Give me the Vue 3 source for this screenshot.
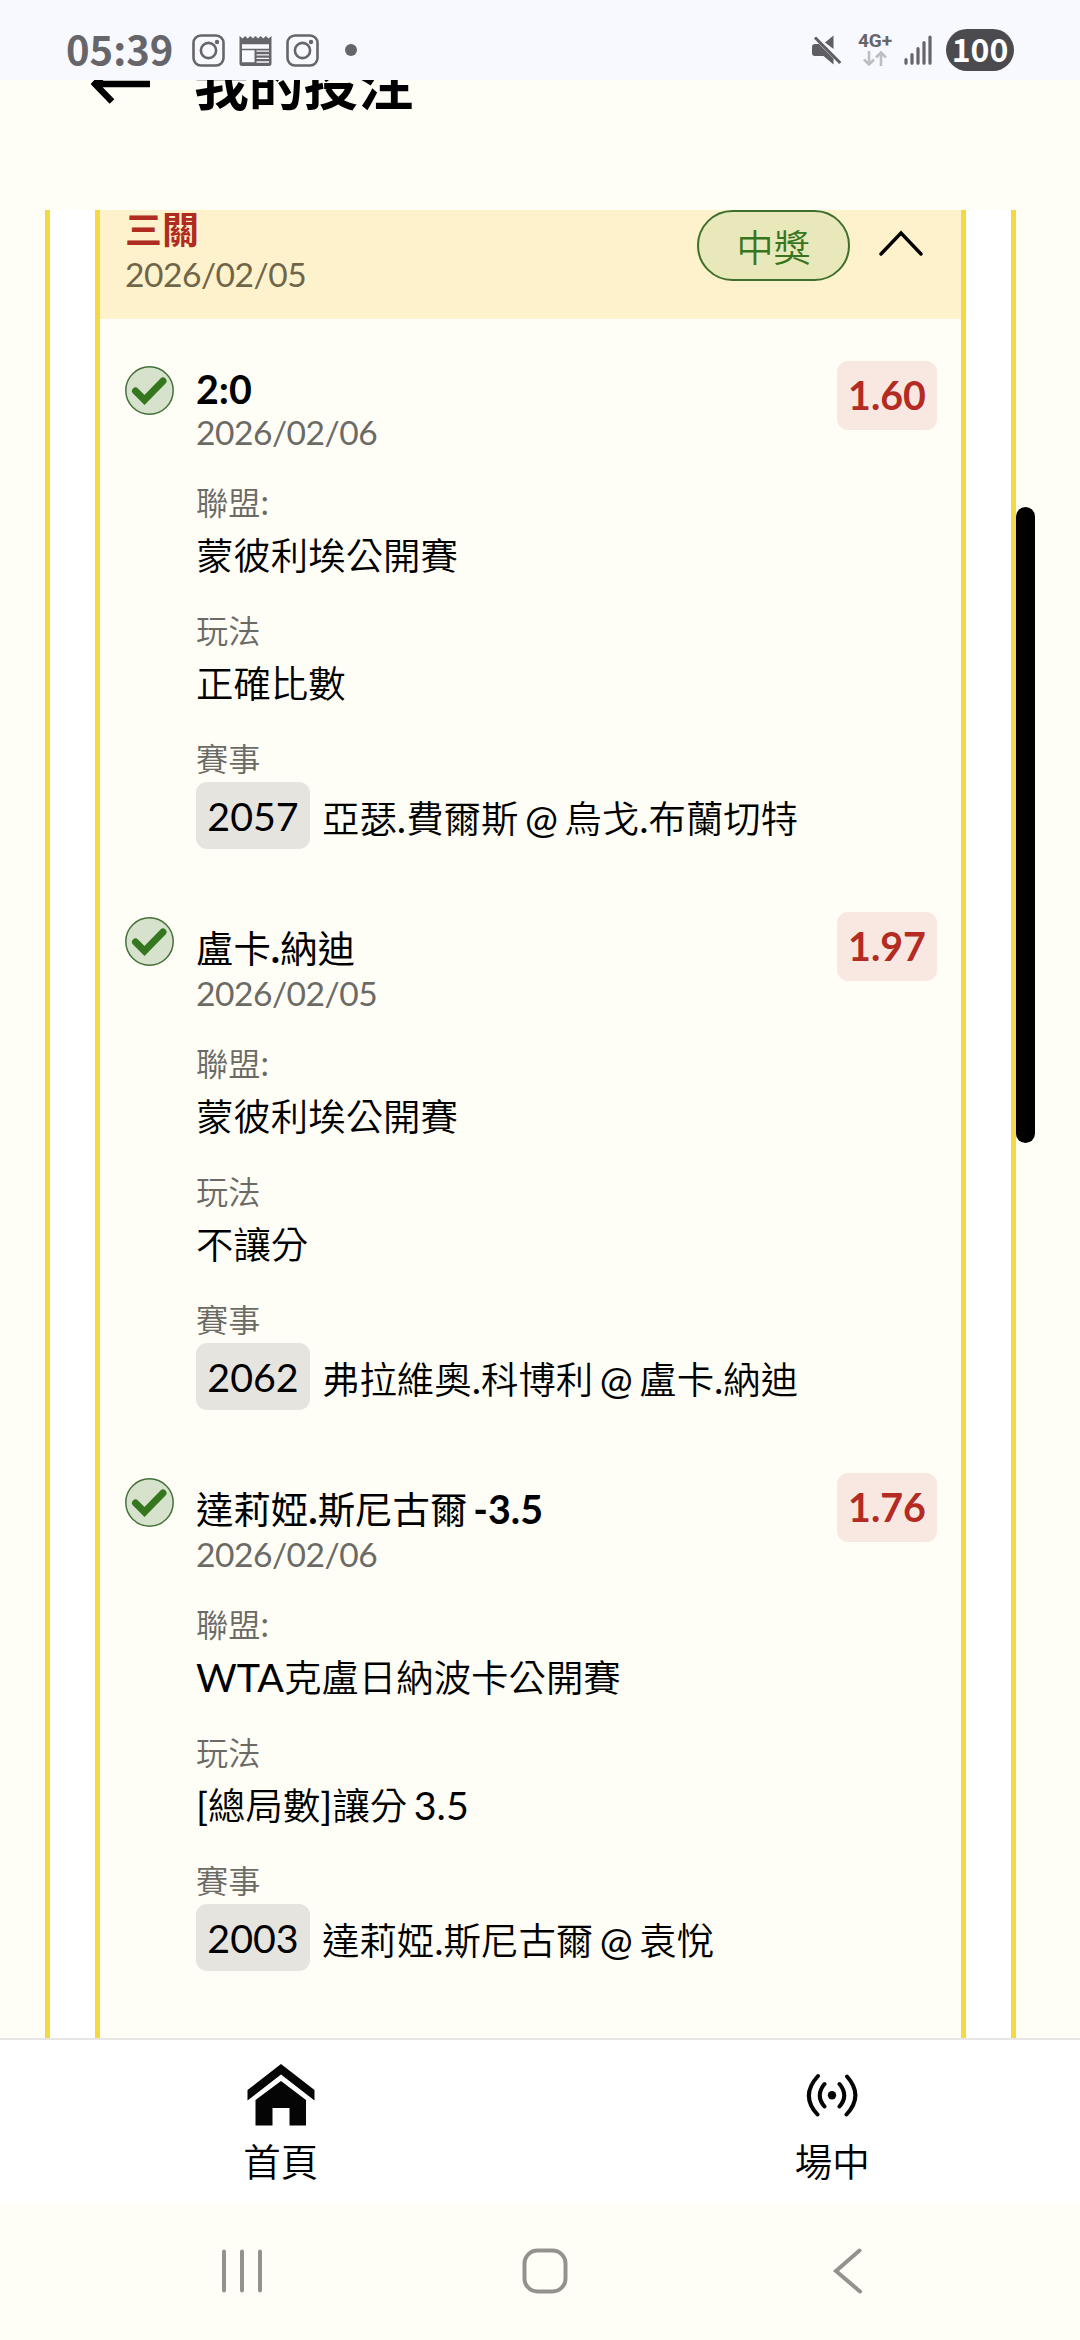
<template>
  <div class="screen">
    <div class="status-bar">
      <div class="status-left">
        <span class="clock">05:39</span>
        <svg class="notif" viewBox="0 0 33 33">
          <rect x="1.5" y="1.5" width="30" height="30" rx="7.5" />
          <circle cx="16.5" cy="16.5" r="7.6" />
          <circle class="solid" cx="25" cy="8" r="2.2" />
        </svg>
        <svg class="notif" viewBox="0 0 33 33">
          <path
            class="solid"
            d="M0.5 2l3 2.4 2.6-2.4 2.6 2.4 2.6-2.4 2.6 2.4 2.6-2.4 2.6 2.4 2.6-2.4 2.6 2.4 2.6-2.4 2.6 2.4 3-2.4V29.5a2.5 2.5 0 0 1-2.5 2.5H3a2.5 2.5 0 0 1-2.5-2.5z"
          />
          <path class="hole" d="M3 10.3h27v4.5H3zM3 16.3h12.5v12H3z" />
          <path class="gap" d="M17.5 17.2H30M17.5 20.8H30M17.5 24.4H30M17.5 28H30" />
        </svg>
        <svg class="notif" viewBox="0 0 33 33">
          <rect x="1.5" y="1.5" width="30" height="30" rx="7.5" />
          <circle cx="16.5" cy="16.5" r="7.6" />
          <circle class="solid" cx="25" cy="8" r="2.2" />
        </svg>
        <span class="more-dot"></span>
      </div>
      <div class="status-right">
        <svg class="mute" viewBox="0 0 30 30">
          <path d="M21.5 0.5V14L13 7.5zM0 12q0-3 3-3H7L21.5 23.500V29.500L11.500 21H3Q0 21 0 18z" />
          <path class="slash" d="M3 2.500L28.300 28" />
        </svg>
        <div class="network">
          <span class="network-type">4G+</span>
          <svg class="network-arrows" viewBox="0 0 24 15">
            <path d="M6 0V13M1 8.500L6 13.500L11 8.500M18 15V2M13 6.500L18 1.500L23 6.500" />
          </svg>
        </div>
        <svg class="signal" viewBox="0 0 28 30">
          <path d="M2 24.500V28.200M8 19.500V28.200M14 13.500V28.200M20 7.500V28.200M26 2V28.200" />
        </svg>
        <span class="battery">100</span>
      </div>
    </div>

    <header class="page-header">
      <div class="page-header-row">
        <svg class="back" viewBox="0 0 60 44">
          <path d="M59 22H4M23 2.500L4 22L21 39.500" />
        </svg>
        <h1>我的投注</h1>
      </div>
    </header>

    <main class="content">
      <div class="outer-card">
        <section class="slip">
          <div class="slip-header">
            <div class="slip-info">
              <div class="slip-type">三關</div>
              <div class="slip-date">2026/02/05</div>
            </div>
            <span class="result">中獎</span>
            <svg class="chevron" viewBox="0 0 44 26">
              <path d="M2 24L22 3L42 24" />
            </svg>
          </div>
          <div class="legs">
            <article v-for="leg in legs" :key="leg.id" class="leg">
              <svg class="won" viewBox="0 0 49 49">
                <circle cx="24.5" cy="24.5" r="23.7" />
                <path d="M10.500 25L19.500 34L38 15" />
              </svg>
              <div class="leg-body">
                <div class="pick" :class="{ tall: hasCjk(leg.pick) }">
                  <span v-for="(part, i) in split(leg.pick)" :key="i" :class="{ cjk: hasCjk(part) }">{{ part }}</span>
                </div>
                <div class="leg-date">{{ leg.date }}</div>
                <div class="label"><span class="cjk">聯盟</span>:</div>
                <div class="value">
                  <span v-for="(part, i) in split(leg.league)" :key="i" :class="{ cjk: hasCjk(part) }">{{ part }}</span>
                </div>
                <div class="label"><span class="cjk">玩法</span></div>
                <div class="value">
                  <span v-for="(part, i) in split(leg.market)" :key="i" :class="{ cjk: hasCjk(part) }">{{ part }}</span>
                </div>
                <div class="label"><span class="cjk">賽事</span></div>
                <div class="match">
                  <span class="match-id">{{ leg.id }}</span>
                  <span class="match-name">
                    <span v-for="(part, i) in split(leg.match)" :key="i" :class="{ cjk: hasCjk(part) }">{{ part }}</span>
                  </span>
                </div>
              </div>
              <span class="odds">{{ leg.odds }}</span>
            </article>
          </div>
        </section>
      </div>
      <div class="scroll-thumb"></div>
    </main>

    <nav class="tab-bar">
      <a class="tab">
        <svg class="tab-icon" viewBox="0 0 68 62">
          <path d="M34 0L67.500 26V36.500L34 10.500L0.500 36.500V26z" />
          <path d="M34 17L59 36V61.500H42.500V44H25.500V61.500H8.500V36z" />
        </svg>
        <span>首頁</span>
      </a>
      <a class="tab">
        <svg class="tab-icon live" viewBox="0 0 68 62">
          <circle cx="34" cy="31.200" r="4.200" />
          <path d="M26.500 20Q17 31.500 26.500 42.500M41.500 20Q51 31.500 41.500 42.500M20 12Q2 31.500 19.500 50.500M49 12.500Q66 31.500 48.500 50.500" />
        </svg>
        <span>場中</span>
      </a>
    </nav>

    <div class="system-nav">
      <svg viewBox="0 0 46 46"><path d="M5 3.500V42.500M23 3.500V42.500M41 3.500V42.500" /></svg>
      <svg viewBox="0 0 46 46"><rect x="2.500" y="2.500" width="41" height="41" rx="13" /></svg>
      <svg viewBox="0 0 46 46"><path d="M34.500 2.500L11 23L35 43.500" /></svg>
    </div>
  </div>
</template>

<script setup>
import { ref } from "vue";

const legs = ref([
  {
    id: "2057",
    pick: "2:0",
    date: "2026/02/06",
    league: "蒙彼利埃公開賽",
    market: "正確比數",
    match: "亞瑟.費爾斯 @ 烏戈.布蘭切特",
    odds: "1.60",
  },
  {
    id: "2062",
    pick: "盧卡.納迪",
    date: "2026/02/05",
    league: "蒙彼利埃公開賽",
    market: "不讓分",
    match: "弗拉維奧.科博利 @ 盧卡.納迪",
    odds: "1.97",
  },
  {
    id: "2003",
    pick: "達莉婭.斯尼古爾 -3.5",
    date: "2026/02/06",
    league: "WTA克盧日納波卡公開賽",
    market: "[總局數]讓分 3.5",
    match: "達莉婭.斯尼古爾 @ 袁悅",
    odds: "1.76",
  },
]);

const hasCjk = (text) => /[\u4e00-\u9fff]/.test(text);

// Chinese runs are set slightly smaller than the Latin text beside them
const split = (text) => text.match(/[\u4e00-\u9fff]+|[^\u4e00-\u9fff]+/g);
</script>

<style>
body {
  margin: 0;
  background: #fffef6;
}
</style>

<style scoped>
.screen {
  width: 1080px;
  height: 2340px;
  display: flex;
  flex-direction: column;
  overflow: hidden;
  background: #fffef6;
  color: #000;
  font-family: Lato, "Noto Sans CJK TC", sans-serif;
  font-size: 39.4px;
  word-spacing: -3.6px;
}

.screen svg {
  display: block;
  flex: none;
  fill: none;
}

.cjk {
  font-size: 0.95em;
  font-weight: 350;
}

/* status bar */
.status-bar {
  height: 80px;
  flex: none;
  box-sizing: border-box;
  padding: 20px 66px 0 66px;
  display: flex;
  justify-content: space-between;
  background: #f8f8ff;
  color: #66666a;
}

.status-left,
.status-right {
  height: 60px;
  display: flex;
  align-items: center;
}

.clock {
  width: 126px;
  font-family: "Noto Sans CJK TC", sans-serif;
  font-size: 40px;
  font-weight: 700;
  line-height: 56px;
  height: 60px;
}

.notif {
  width: 33px;
  height: 33px;
  margin-right: 14px;
  stroke: #66666a;
  stroke-width: 2.6;
}

.notif .solid {
  fill: #66666a;
  stroke: none;
}

.notif .gap {
  stroke: #f8f8ff;
  stroke-width: 1.3;
}

.notif .hole {
  fill: #f8f8ff;
  stroke: none;
}

.more-dot {
  width: 12px;
  height: 12px;
  margin-left: 12px;
  border-radius: 50%;
  background: #66666a;
}

.mute {
  width: 30px;
  height: 30px;
}

.mute path {
  fill: #5f5f63;
}

.mute .slash {
  stroke: #5f5f63;
  stroke-width: 3;
}

.network {
  width: 34px;
  margin-left: 16px;
  display: flex;
  flex-direction: column;
  align-items: center;
  gap: 4px;
}

.network-type {
  font-family: Roboto, sans-serif;
  font-size: 19px;
  font-weight: 700;
  line-height: 13px;
}

.network-arrows {
  width: 24px;
  height: 15px;
  stroke: #bdbdc2;
  stroke-width: 2.6;
}

.signal {
  width: 28px;
  height: 30px;
  margin-left: 12px;
  stroke: #66666a;
  stroke-width: 3.2;
  stroke-linecap: round;
}

.battery {
  width: 68px;
  height: 42px;
  margin-left: 14px;
  border-radius: 21px;
  background: #4b4b4f;
  color: #fff;
  font-family: "Noto Sans CJK TC", sans-serif;
  font-size: 32px;
  font-weight: 700;
  line-height: 39px;
  text-align: center;
}

/* page header, scrolled partly under the status bar */
.page-header {
  height: 130px;
  flex: none;
  overflow: hidden;
}

.page-header-row {
  height: 80px;
  margin-top: -36px;
  padding-left: 91px;
  display: flex;
  align-items: center;
}

.back {
  width: 60px;
  height: 44px;
  stroke: #000;
  stroke-width: 6.5;
}

.page-header h1 {
  margin: 0 0 0 43px;
  font-size: 54.8px;
  font-weight: 700;
  line-height: 80px;
}

/* bet list */
.content {
  position: relative;
  height: 1828px;
  flex: none;
  overflow: hidden;
  padding: 0 64px 0 45px;
}

.outer-card {
  height: 1828px;
  box-sizing: border-box;
  padding: 0 45px;
  border: solid #f6d843;
  border-width: 0 5px;
  background: #fff;
}

.slip {
  height: 1828px;
  box-sizing: border-box;
  border: solid #f6d843;
  border-width: 0 5px;
  background: #fffef6;
}

.slip-header {
  height: 109px;
  display: flex;
  align-items: flex-start;
  padding: 0 38px 0 25px;
  background: #fef2cc;
}

.slip-info {
  flex: 1;
}

.slip-type {
  height: 42px;
  color: #b02b20;
  font-size: 37px;
  font-weight: 700;
  line-height: 39px;
}

.slip-date {
  color: #6f6549;
  font-size: 33.6px;
  line-height: 44px;
  letter-spacing: -0.5px;
}

.result {
  width: 153px;
  height: 71px;
  box-sizing: border-box;
  border: 2px solid #3f6f2c;
  border-radius: 36px;
  background: #e9e8bb;
  color: #37761f;
  font-size: 37px;
  font-weight: 350;
  line-height: 72px;
  text-align: center;
}

.chevron {
  width: 44px;
  height: 26px;
  margin: 20px 0 0 29px;
  stroke: #000;
  stroke-width: 3.4;
  stroke-linecap: round;
}

.legs {
  padding-top: 42px;
}

.leg {
  display: flex;
  align-items: flex-start;
  padding: 0 24px 63px 25px;
}

.won {
  width: 49px;
  height: 49px;
  margin-top: 5px;
}

.won circle {
  fill: #d6e2cc;
  stroke: #44703a;
  stroke-width: 1.5;
}

.won path {
  stroke: #34771f;
  stroke-width: 7;
  stroke-linecap: round;
}

.leg-body {
  flex: 1;
  margin: 5px 0 0 22px;
}

.pick {
  height: 46px;
  font-weight: 700;
  line-height: 45px;
  white-space: pre;
}

.pick.tall {
  height: 51px;
  padding-top: 5px;
  line-height: 51px;
}

.pick .cjk {
  font-weight: 400;
}

.leg-date {
  margin-bottom: 30px;
  color: #6b6a65;
  font-size: 33.6px;
  line-height: 40px;
  letter-spacing: -0.5px;
}

.label {
  height: 40px;
  color: #6b6a65;
  font-size: 33.9px;
  line-height: 40px;
}

.value {
  height: 66px;
  margin-bottom: 22px;
  line-height: 66px;
  white-space: pre;
}

.match {
  display: flex;
  align-items: center;
  gap: 12px;
  height: 67px;
  margin-top: 4px;
}

.match-id {
  width: 114px;
  border-radius: 11px;
  background: #e6e4de;
  line-height: 67px;
  text-align: center;
}

.match-name {
  padding-top: 4px;
  line-height: 63px;
  white-space: pre;
}

.match-name span {
  white-space: pre;
}

.odds {
  width: 100px;
  height: 69px;
  border-radius: 11px;
  background: #f8e8e1;
  color: #b32b22;
  font-weight: 700;
  line-height: 68px;
  text-align: center;
}

.scroll-thumb {
  position: absolute;
  top: 297px;
  left: 1016px;
  width: 19px;
  height: 636px;
  border-radius: 10px;
  background: #000;
}

/* bottom tabs */
.tab-bar {
  height: 165px;
  flex: none;
  box-sizing: border-box;
  border-top: 2px solid #e8e6e4;
  padding-left: 5px;
  display: flex;
  background: #fff;
}

.tab {
  width: 551.5px;
  flex: none;
  display: flex;
  flex-direction: column;
  align-items: center;
  padding-top: 24px;
  font-size: 37.5px;
  font-weight: 350;
}

.tab-icon {
  width: 68px;
  height: 62px;
}

.screen .tab-icon {
  fill: #050505;
}

.live path {
  fill: none;
  stroke: #050505;
  stroke-width: 4;
  stroke-linecap: round;
}

.tab span {
  margin-top: 8px;
  line-height: 56px;
}

/* android navigation */
.system-nav {
  height: 137px;
  display: flex;
  justify-content: center;
  gap: 257px;
  padding: 45px 0 0 10px;
  box-sizing: border-box;
}

.system-nav svg {
  width: 46px;
  height: 46px;
  stroke: #94928d;
  stroke-width: 4;
  stroke-linecap: round;
}
</style>
